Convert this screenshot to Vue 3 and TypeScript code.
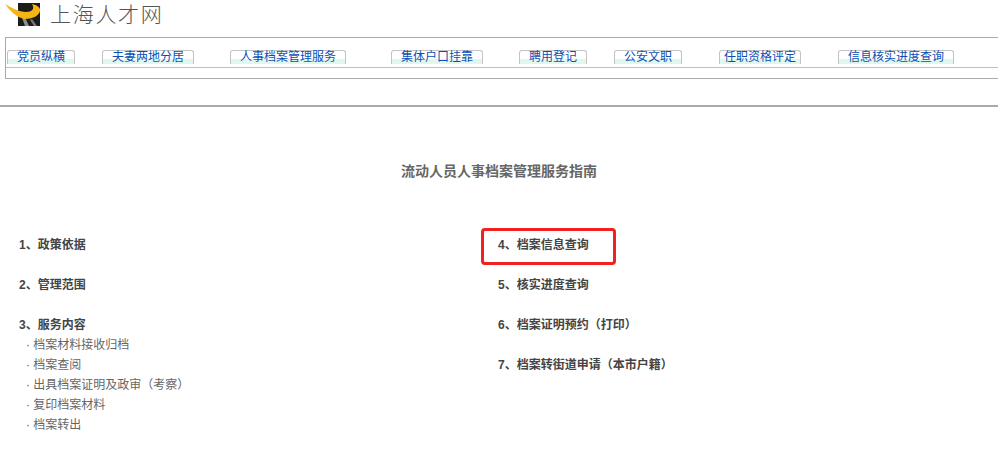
<script setup lang="ts">
const tabs: string[] = ['党员纵横', '夫妻两地分居', '人事档案管理服务', '集体户口挂靠', '聘用登记', '公安文职', '任职资格评定', '信息核实进度查询']
interface Item { text: string; highlight?: boolean; subs?: string[] }
const left: Item[] = [
  { text: '1、政策依据' },
  { text: '2、管理范围' },
  { text: '3、服务内容', subs: ['档案材料接收归档', '档案查阅', '出具档案证明及政审（考察）', '复印档案材料', '档案转出'] },
]
const right: Item[] = [
  { text: '4、档案信息查询', highlight: true },
  { text: '5、核实进度查询' },
  { text: '6、档案证明预约（打印）' },
  { text: '7、档案转街道申请（本市户籍）' },
]
const columns: Item[][] = [left, right]
</script>

<template>
  <div class="page">
    <header class="brand">
      <svg class="logo" viewBox="0 0 36 24" width="36" height="24" aria-hidden="true">
        <rect x="12" y="0" width="22" height="23" fill="#1c1c1c" />
        <path d="M15 12 L18 12 L23 23 L19 23 Z" fill="#8f8f8f" />
        <path d="M24 17 L26 16 L31 23 L28 23 Z" fill="#777" />
        <path d="M-1 1 C6 5 13 9 20 9 C26 9 29 6 26 1 C31 2 35 5 34 8 C33 13 26 16 19 16 C11 15 4 8 -1 1 Z" fill="#f6b512" />
      </svg>
      <h1 class="site-name">上海人才网</h1>
    </header>

    <nav class="nav-box">
      <ul class="tabs">
        <li v-for="tab in tabs" :key="tab" class="tab">{{ tab }}</li>
      </ul>
    </nav>

    <hr class="divider" />

    <main class="guide">
      <h2 class="guide-title">流动人员人事档案管理服务指南</h2>
      <div class="guide-cols">
        <div v-for="(col, i) in columns" :key="i" class="guide-col">
          <div v-for="item in col" :key="item.text" class="entry">
            <div class="entry-title" :class="{ marked: item.highlight }">{{ item.text }}</div>
            <div v-for="sub in item.subs" :key="sub" class="sub">· {{ sub }}</div>
          </div>
        </div>
      </div>
    </main>
  </div>
</template>

<style>
html, body { margin: 0; background: #fff; }
</style>

<style scoped>
.page {
  width: 998px;
  height: 455px;
  overflow: hidden;
  background: #fff;
  font-family: "Liberation Sans", "Noto Sans CJK SC", sans-serif;
  font-size: 12px;
}
.brand {
  height: 37px;
  display: flex;
  align-items: flex-start;
  padding: 3px 0 0 6px;
  box-sizing: border-box;
}
.logo { display: block; overflow: visible; }
.site-name {
  margin: -1px 0 0 8px;
  font-size: 21px;
  line-height: 26px;
  font-weight: 300;
  letter-spacing: 1.7px;
  color: #555;
}
.nav-box {
  margin-left: 5px;
  height: 42px;
  box-sizing: border-box;
  border: 1px solid #aaa;
  border-right: 0;
}
.tabs {
  list-style: none;
  margin: 0;
  padding: 12px 0 3px 1px;
  height: 30px;
  box-sizing: border-box;
  display: flex;
  align-items: flex-end;
  border-bottom: 1px solid #efb95c;
}
.tab {
  height: 14px;
  line-height: 12px;
  padding: 0 9px;
  box-sizing: border-box;
  color: #0b4fb5;
  white-space: nowrap;
  border: 1px solid #c4c4c4;
  border-bottom: 0;
  border-radius: 3px 3px 0 0;
  background: linear-gradient(#fff 0, #fff 8px, #e0f7ee 8px);
}
.tab:nth-child(2) { margin-left: 27px; }
.tab:nth-child(3) { margin-left: 36px; }
.tab:nth-child(4) { margin-left: 45px; }
.tab:nth-child(5) { margin-left: 36px; }
.tab:nth-child(6) { margin-left: 27px; }
.tab:nth-child(7) { margin-left: 37px; padding: 0 4px; }
.tab:nth-child(8) { margin-left: 37px; }
.divider {
  margin: 26px 0 0;
  height: 2px;
  border: 0;
  background: #aaa;
}
.guide-title {
  margin: 55px 0 0;
  text-align: center;
  font-size: 14px;
  line-height: 18px;
  font-weight: 700;
  color: #666;
}
.guide-cols {
  display: flex;
  margin-top: 55px;
}
.guide-col { position: relative; }
.guide-col:first-child { width: 498px; padding-left: 19px; box-sizing: border-box; }
.entry { margin-bottom: 20px; }
.entry-title {
  position: relative;
  line-height: 20px;
  font-weight: 700;
  color: #444;
}
.marked::after {
  content: "";
  position: absolute;
  left: -17px;
  top: -7px;
  width: 135px;
  height: 37px;
  box-sizing: border-box;
  border: 3px solid #f2201e;
  border-radius: 4px;
  pointer-events: none;
}
.sub {
  line-height: 20px;
  padding-left: 7px;
  color: #666;
}
</style>
